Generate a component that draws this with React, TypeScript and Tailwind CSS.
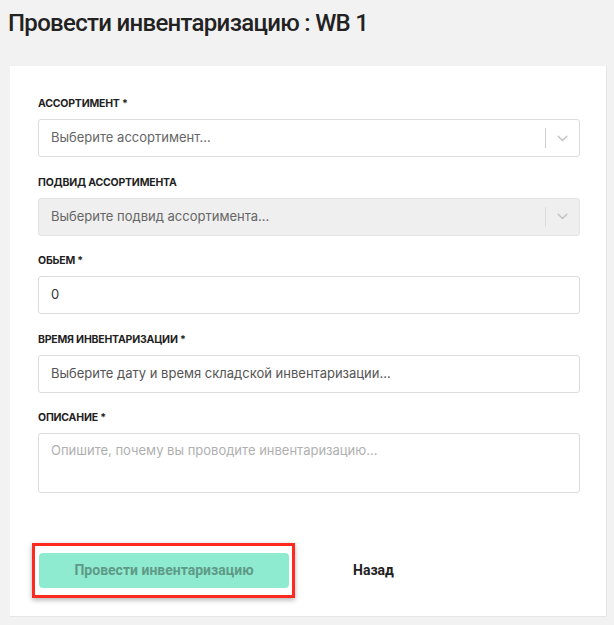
import React from 'react';

const formFont = { fontFamily: 'Inter, "Noto Sans", sans-serif' };

const Label: React.FC<{ text: string; required?: boolean }> = ({ text, required }) => (
  <div className="text-[10.5px] leading-[12px] font-bold uppercase text-[#1f1f1f] mb-[9px] tracking-[-0.2px]">
    {text}
    {required && <span> *</span>}
  </div>
);

const Chevron = () => (
  <svg width="11" height="7" viewBox="0 0 11 7" fill="none">
    <path d="M1.2 1.2 L5.5 5.5 L9.8 1.2" stroke="#c4c4c4" strokeWidth="1.5" strokeLinecap="round" strokeLinejoin="round" />
  </svg>
);

const SelectBox: React.FC<{ placeholder: string; disabled?: boolean }> = ({ placeholder, disabled }) => (
  <div
    className={`h-[38px] flex items-center rounded-[3px] border ${
      disabled ? 'bg-[#efefef] border-[#e3e3e3]' : 'bg-white border-[#dcdcdc]'
    }`}
  >
    <div className="flex-1 pl-3 text-[13px] text-[#666]">{placeholder}</div>
    <div className={`w-px h-[20px] ${disabled ? 'bg-[#dcdcdc]' : 'bg-[#cccccc]'}`} />
    <div className="w-[33px] flex justify-center">
      <Chevron />
    </div>
  </div>
);

export default function App() {
  return (
    <div className="min-h-[625px] bg-[#f2f2f2] pb-[9px]" style={formFont}>
      <h1
        className="px-2 pt-[5px] h-[66px] text-[24px] font-medium text-[#222] tracking-[-0.7px]"
        style={{ fontFamily: 'Roboto, "Liberation Sans", sans-serif' }}
      >
        Провести инвентаризацию : WB 1
      </h1>

      <div className="ml-[10px] mr-[7px] bg-white border-r border-b border-[#e6e6e6] pl-[28px] pr-[26px] pt-[32px] pb-[18px]">
        <div className="mb-[19.5px]">
          <Label text="Ассортимент" required />
          <SelectBox placeholder="Выберите ассортимент..." />
        </div>

        <div className="mb-[19.5px]">
          <Label text="Подвид ассортимента" />
          <SelectBox placeholder="Выберите подвид ассортимента..." disabled />
        </div>

        <div className="mb-[19.5px]">
          <Label text="Обьем" required />
          <div className="h-[38px] flex items-center px-3 border border-[#dcdcdc] rounded-[3px] text-[13px] text-[#333]">
            0
          </div>
        </div>

        <div className="mb-[19.5px]">
          <Label text="Время инвентаризации" required />
          <div className="h-[38px] flex items-center px-3 border border-[#dcdcdc] rounded-[3px] text-[13px] text-[#555]">
            Выберите дату и время складской инвентаризации...
          </div>
        </div>

        <div>
          <Label text="Описание" required />
          <div className="h-[60px] px-3 pt-[7px] border border-[#dcdcdc] rounded-[3px] text-[13px] text-[#b0b0b0]">
            Опишите, почему вы проводите инвентаризацию...
          </div>
        </div>

        <div
          className="mt-[50px] flex items-center"
          style={{ fontFamily: 'Roboto, "Liberation Sans", sans-serif' }}
        >
          <div className="-ml-[6px] border-[3px] border-[#ff2a1f] pl-[4px] pr-[3px] py-[7px] shadow-[0_2px_5px_rgba(0,0,0,0.3)]">
            <button className="w-[250px] h-[35px] rounded-[4px] bg-[#8eebd0] text-[14px] font-bold text-[#5f9a87]">
              Провести инвентаризацию
            </button>
          </div>
          <button className="ml-[58px] text-[14px] font-bold text-[#222]">Назад</button>
        </div>
      </div>
    </div>
  );
}
